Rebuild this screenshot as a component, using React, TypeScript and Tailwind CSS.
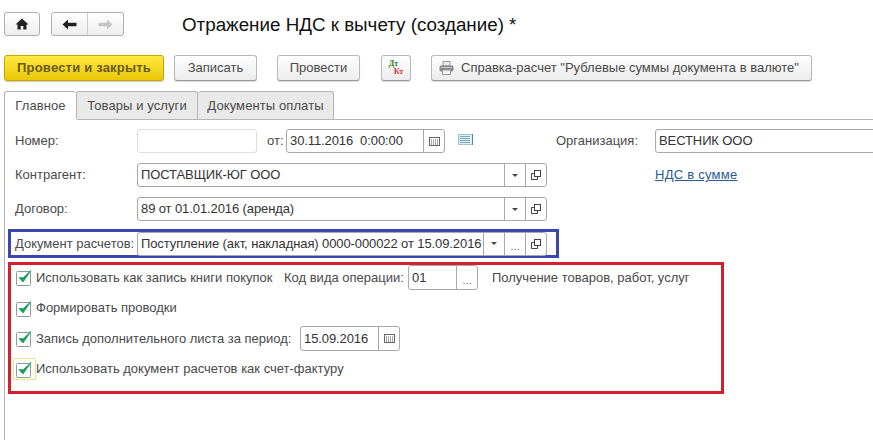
import type { ReactNode } from 'react'

function HomeIcon() {
  return (
    <svg width="14" height="12" viewBox="0 0 14 12">
      <path d="M7 0.5 L0.5 6.5 L2.5 6.5 L2.5 11.5 L5.7 11.5 L5.7 8 L8.3 8 L8.3 11.5 L11.5 11.5 L11.5 6.5 L13.5 6.5 Z" fill="#222" />
    </svg>
  )
}

function ArrowIcon({ color, flip }: { color: string; flip?: boolean }) {
  return (
    <svg width="15" height="11" viewBox="0 0 15 11" className={flip ? 'rotate-180' : ''}>
      <path d="M0.5 5.5 L6 0.5 L6 3.8 L14.5 3.8 L14.5 7.2 L6 7.2 L6 10.5 Z" fill={color} />
    </svg>
  )
}

function PrinterIcon() {
  return (
    <svg width="15" height="14" viewBox="0 0 15 14">
      <rect x="4" y="0.5" width="7" height="4.5" fill="#eee" stroke="#999" />
      <rect x="0.5" y="4.5" width="14" height="6" rx="1.5" fill="#8a8a8a" />
      <rect x="2" y="6" width="11" height="1" fill="#c8c8c8" />
      <rect x="3.5" y="9" width="8" height="4.5" fill="#f4f4f4" stroke="#999" />
    </svg>
  )
}

function CalendarIcon() {
  return (
    <svg width="11" height="9" viewBox="0 0 11 9">
      <rect x="0.5" y="0.5" width="10" height="8" fill="#fff" stroke="#666" />
      <path d="M2 3h1M4 3h1M6 3h1M8 3h1M2 5h1M4 5h1M6 5h1M8 5h1M2 7h1M4 7h1M6 7h1M8 7h1" stroke="#555" />
    </svg>
  )
}

function OpenIcon() {
  return (
    <svg width="10" height="10" viewBox="0 0 10 10" fill="none" stroke="#444">
      <rect x="3.5" y="0.5" width="6" height="6" />
      <path d="M3.5 3.5 H0.5 V9.5 H6.5 V6.5" />
    </svg>
  )
}

function NoteIcon() {
  return (
    <svg width="15" height="11" viewBox="0 0 15 11">
      <rect x="0.5" y="0.5" width="14" height="10" fill="#dff0f4" stroke="#9cc6d2" />
      <path d="M2 2.5h10M2 4.5h10M2 6.5h10M2 8.5h10" stroke="#7fa9b8" />
      <path d="M14.5 0v11" stroke="#5d8595" />
    </svg>
  )
}

function Caret() {
  return <span className="w-0 h-0 border-x-[3px] border-x-transparent border-t-[3px] border-t-[#444]" />
}

function Dots() {
  return <span className="text-[11px] leading-none text-[#666] mt-[5px]">...</span>
}

function Btn({ children, className }: { children: ReactNode; className?: string }) {
  return (
    <div className={'h-[26px] flex items-center justify-center rounded-[3px] border border-[#b9b9b9] border-b-[#999] bg-gradient-to-b from-white to-[#ececec] shadow-[0_1px_1px_rgba(0,0,0,0.15)] text-[#4a4a4a] ' + (className ?? '')}>
      {children}
    </div>
  )
}

function Field({ w, text, light, h = 'h-[24px]', parts = [] }: { w: string; text?: string; light?: boolean; h?: string; parts?: ReactNode[] }) {
  return (
    <div className={`${w} ${h} shrink-0 flex bg-white rounded-[3px] border ${light ? 'border-[#dddddd]' : 'border-[#a9a9a9]'}`}>
      <div className="flex-1 min-w-0 px-[3px] flex items-center whitespace-pre text-[#333] tracking-[-0.1px]">{text}</div>
      {parts.map((p, i) => (
        <div key={i} className="w-[21px] border-l border-[#a9a9a9] flex items-center justify-center">
          {p}
        </div>
      ))}
    </div>
  )
}

function Check({ focused }: { focused?: boolean }) {
  return (
    <div className={`w-[23px] h-[22px] flex items-center justify-center border ${focused ? 'border-[#efe38a]' : 'border-transparent'}`}>
      <svg width="17" height="17" viewBox="0 0 17 17">
        <rect x="0.5" y="2.5" width="14" height="14" rx="1" fill="#fff" stroke="#8c9c98" />
        <path d="M3 8.5 L7 13 L15 1.5 L7.2 8.8 Z" fill="#12a05c" stroke="#12a05c" strokeWidth="0.8" />
      </svg>
    </div>
  )
}

function Row({ label, children }: { label: string; children: ReactNode }) {
  return (
    <div className="flex items-center h-[24px] mb-[10px]">
      <div className="w-[122px] shrink-0">{label}</div>
      {children}
    </div>
  )
}

export default function App() {
  const drop = [<Caret key="c" />, <OpenIcon key="o" />]

  return (
    <div className="w-[873px] h-[440px] overflow-hidden bg-white pt-[12px] pl-[4px] text-[13px] text-[#4a4a4a] font-['Liberation_Sans',Arial,sans-serif]">
      <div className="flex items-center h-[24px]">
        <div className="w-[36px] h-[24px] flex items-center justify-center rounded-[3px] border border-[#b0b0b0] bg-gradient-to-b from-white to-[#eeeeee]">
          <HomeIcon />
        </div>
        <div className="ml-[11px] w-[73px] h-[24px] flex rounded-[3px] border border-[#b0b0b0] bg-gradient-to-b from-white to-[#eeeeee]">
          <div className="w-[36px] flex items-center justify-center border-r border-[#cccccc]">
            <ArrowIcon color="#222" />
          </div>
          <div className="flex-1 flex items-center justify-center">
            <ArrowIcon color="#c4c4c4" flip />
          </div>
        </div>
        <div className="ml-[58px] pt-[3px] text-[18.8px] text-[#111] whitespace-nowrap">Отражение НДС к вычету (создание) *</div>
      </div>

      <div className="flex items-center mt-[19px]">
        <div className="w-[160px] h-[26px] flex items-center justify-center rounded-[3px] border border-[#c7a400] bg-gradient-to-b from-[#ffe93c] to-[#e9c700] shadow-[0_1px_1px_rgba(0,0,0,0.2)] font-bold tracking-[0.2px] text-[#6a5a14]">
          Провести и закрыть
        </div>
        <Btn className="ml-[10px] w-[83px]">Записать</Btn>
        <Btn className="ml-[20px] w-[83px]">Провести</Btn>
        <Btn className="ml-[21px] w-[30px]">
          <div className="flex flex-col text-[8px] leading-[8px] font-bold font-['Liberation_Serif',serif]">
            <span className="text-[#2e7d1e]">Дт</span>
            <span className="text-[#d4383c] ml-[5px]">Кт</span>
          </div>
        </Btn>
        <Btn className="ml-[20px] w-[381px] pl-[7px] justify-start">
          <div className="flex items-center gap-[7px] whitespace-nowrap">
            <PrinterIcon />
            <span>Справка-расчет "Рублевые суммы документа в валюте"</span>
          </div>
        </Btn>
      </div>

      <div className="flex items-end h-[28px] mt-[10px] tracking-[0.1px]">
        <div className="w-[72px] h-[28px] flex items-center justify-center border-l border-t border-[#b5b5b5] rounded-t-[3px] bg-white">Главное</div>
        <div className="w-[122px] h-[28px] flex items-center justify-center border-x border-t border-[#b5b5b5] rounded-t-[3px] bg-[#e9e9e9]">Товары и услуги</div>
        <div className="w-[136px] h-[28px] flex items-center justify-center border-r border-t border-[#b5b5b5] rounded-t-[3px] bg-[#e9e9e9]">Документы оплаты</div>
      </div>

      <div className="h-[321px] border-l border-[#b5b5b5]">
        <div className="h-px ml-[72px] bg-[#b5b5b5]" />
        <div className="pt-[9px] pl-[10px]">
          <Row label="Номер:">
            <Field w="w-[120px]" light />
            <div className="w-[19px] ml-[10px] shrink-0">от:</div>
            <Field w="w-[159px]" text="30.11.2016  0:00:00" parts={[<CalendarIcon key="k" />]} />
            <div className="ml-[13px] mb-[3px] shrink-0"><NoteIcon /></div>
            <div className="w-[99px] ml-[83px] shrink-0">Организация:</div>
            <Field w="w-[300px]" text="ВЕСТНИК ООО" />
          </Row>
          <Row label="Контрагент:">
            <Field w="w-[410px]" text="ПОСТАВЩИК-ЮГ ООО" parts={drop} />
            <div className="ml-[108px] text-[#2a5c92] underline tracking-[0.25px] whitespace-nowrap">НДС в сумме</div>
          </Row>
          <Row label="Договор:">
            <Field w="w-[410px]" text="89 от 01.01.2016 (аренда)" parts={drop} />
          </Row>
        </div>

        <div className="ml-[3px] -mt-[2px] w-[551px] h-[29px] border-[3px] border-[#3c46b0] pl-[4px] flex items-center">
          <div className="w-[122px] shrink-0 whitespace-nowrap">Документ расчетов:</div>
          <Field w="w-[410px]" text="Поступление (акт, накладная) 0000-000022 от 15.09.2016" parts={[<Caret key="c" />, <Dots key="d" />, <OpenIcon key="o" />]} />
        </div>

        <div className="ml-[3px] mt-[4px] w-[716px] h-[132px] border-[3px] border-[#d3202e] pl-[2px]">
          <div className="flex items-center h-[25px]">
            <Check />
            <div className="w-[248px] whitespace-nowrap">Использовать как запись книги покупок</div>
            <div className="w-[124px] whitespace-nowrap">Код вида операции:</div>
            <Field w="w-[70px]" h="h-[25px]" text="01" parts={[<Dots key="d" />]} />
            <div className="ml-[14px] whitespace-nowrap">Получение товаров, работ, услуг</div>
          </div>
          <div className="flex items-center h-[24px] mt-[6px]">
            <Check />
            <div>Формировать проводки</div>
          </div>
          <div className="flex items-center h-[25px] mt-[6px]">
            <Check />
            <div className="w-[264px] whitespace-nowrap">Запись дополнительного листа за период:</div>
            <Field w="w-[100px]" h="h-[25px]" text="15.09.2016" parts={[<CalendarIcon key="k" />]} />
          </div>
          <div className="flex items-center h-[24px] mt-[6px]">
            <Check focused />
            <div className="whitespace-nowrap">Использовать документ расчетов как счет-фактуру</div>
          </div>
        </div>
      </div>
    </div>
  )
}
